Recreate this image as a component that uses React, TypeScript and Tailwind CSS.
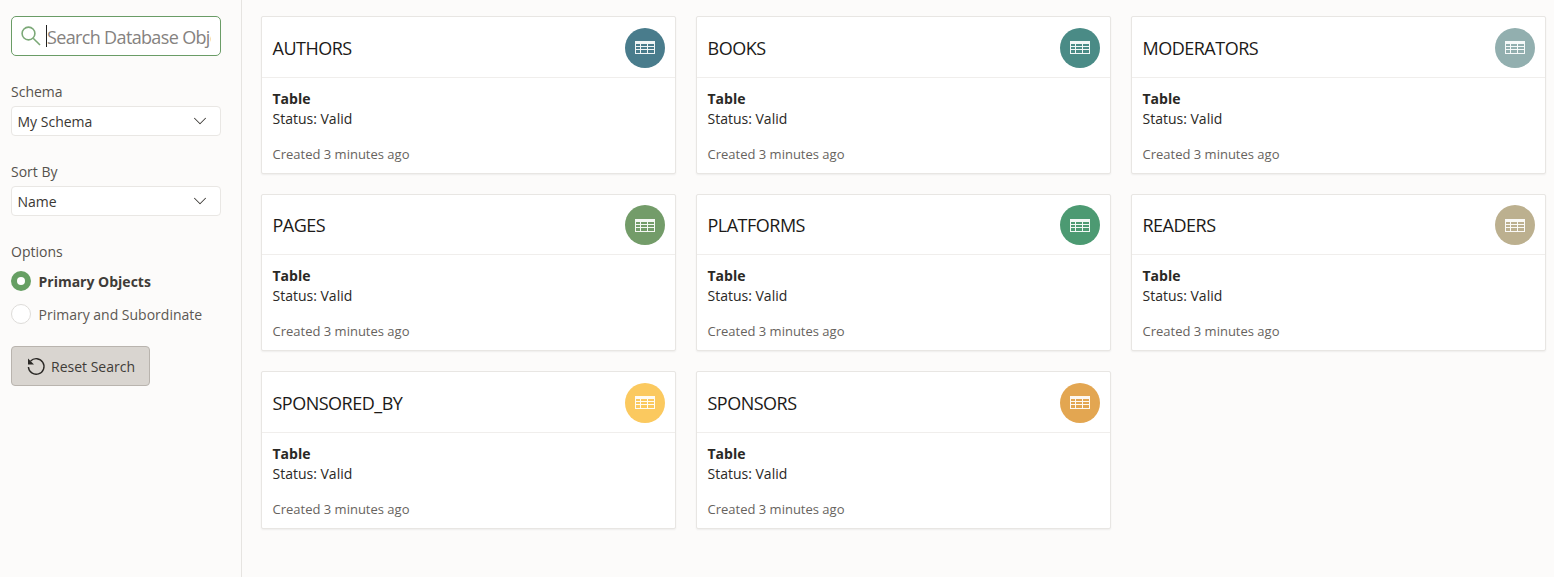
import { ChevronDown } from "lucide-react";

const FONT = "font-['Open_Sans','Noto_Sans',sans-serif]";

const TABLES = [
  { name: "AUTHORS", color: "bg-[#497c8c]" },
  { name: "BOOKS", color: "bg-[#4a8b86]" },
  { name: "MODERATORS", color: "bg-[#92afaf]" },
  { name: "PAGES", color: "bg-[#739c69]" },
  { name: "PLATFORMS", color: "bg-[#4c9a72]" },
  { name: "READERS", color: "bg-[#bcb08f]" },
  { name: "SPONSORED_BY", color: "bg-[#fbc95f]" },
  { name: "SPONSORS", color: "bg-[#e3a651]" },
];

const TableIcon = () => (
  <svg width="20" height="13" viewBox="0 0 20 13" fill="#fff" fillOpacity="0.92">
    <path
      fillRule="evenodd"
      d="M0 0H20V13H0ZM1 3V5H5V3ZM6 3V5H12V3ZM13 3V5H19V3ZM1 6V8H5V6ZM6 6V8H12V6ZM13 6V8H19V6ZM1 9V12H5V9ZM6 9V12H12V9ZM13 9V12H19V9Z"
    />
  </svg>
);

const SelectField = ({ label, value }: { label: string; value: string }) => (
  <div className="flex flex-col">
    <label className="text-[14px] leading-[22px] text-[#56524d] mb-[3px]">{label}</label>
    <div className="h-[30px] bg-white border border-[#e9e7e4] rounded-[4px] flex items-center justify-between pl-[5.5px] pr-[9px] text-[14px] text-[#3a3733]">
      <span>{value}</span>
      <ChevronDown size={22} strokeWidth={1.1} className="text-[#3f3c38]" />
    </div>
  </div>
);

const Card = ({ name, color }: { name: string; color: string }) => (
  <div className="h-[157.5px] bg-white border border-[#e8e6e3] rounded-[2px] shadow-[0_1px_2px_rgba(0,0,0,0.06)] flex flex-col">
    <div className="h-[60.75px] shrink-0 border-b border-[#f0eeec] pt-[10.75px] flex items-start justify-between pl-[10.5px] pr-[10px]">
      <h3 className="h-10 pt-[1px] flex items-center text-[18px] tracking-[-0.5px] text-[#1c1a18]">{name}</h3>
      <div className={`w-10 h-10 rounded-full flex items-center justify-center ${color}`}>
        <TableIcon />
      </div>
    </div>
    <div className="pl-[10.5px] pt-[11px] text-[14px] leading-[20px] text-[#2a2825]">
      <div className="font-bold">Table</div>
      <div>Status: Valid</div>
      <div className="mt-[15px] text-[13px] text-[#67635e]">Created 3 minutes ago</div>
    </div>
  </div>
);

export default function App() {
  return (
    <div className={`flex h-[577px] w-[1554px] overflow-hidden bg-[#fcfbfa] ${FONT}`}>
      <aside className="w-[242px] shrink-0 border-r border-[#e6e4e1] pl-[11px] pr-[20px] pt-4">
        <div className="h-10 bg-white border border-[#6a9c66] rounded-[5px] flex items-center pl-[9px] pr-[9px] overflow-hidden">
          <svg width="20" height="20" viewBox="0 0 20 20" fill="none" stroke="#7ba877" strokeWidth="1.6" className="shrink-0">
            <circle cx="7.5" cy="7.5" r="6.4" />
            <path d="M12.2 12.2 L19 19" />
          </svg>
          <span className="w-px h-[22px] bg-[#222] ml-[5px] shrink-0" />
          <input
            readOnly
            placeholder="Search Database Objects"
            className="min-w-0 flex-1 bg-transparent outline-none pt-[2px] text-[18px] tracking-[-0.65px] placeholder:text-[#858280]"
          />
        </div>
        <div className="mt-[25px] flex flex-col gap-[25px]">
          <SelectField label="Schema" value="My Schema" />
          <SelectField label="Sort By" value="Name" />
        </div>
        <div className="mt-[25px] text-[14px] leading-[22px] text-[#56524d]">Options</div>
        <div className="mt-[8px] flex items-center gap-[7.5px] h-5">
          <span className="w-5 h-5 rounded-full bg-[#669f63] flex items-center justify-center">
            <span className="w-2 h-2 rounded-full bg-white" />
          </span>
          <span className="text-[14px] font-bold text-[#3f3c38]">Primary Objects</span>
        </div>
        <div className="mt-[13px] flex items-center gap-[7.5px] h-5">
          <span className="w-5 h-5 rounded-full bg-white border border-[#dedcd9]" />
          <span className="text-[14px] text-[#5c5853]">Primary and Subordinate</span>
        </div>
        <button className="mt-[22px] h-10 w-[139px] bg-[#d9d5d0] border border-[#b9b4ae] rounded-[4px] flex items-center justify-center gap-[5px] text-[14px] text-[#3f3c38]">
          <svg width="20" height="20" viewBox="0 0 20 20" fill="none" stroke="#2a2825" strokeWidth="1.4">
            <path d="M4.6 5 A7.8 7.8 0 1 1 2.4 11" />
            <path d="M2 2.5 V8.5 H8 Z" fill="#2a2825" stroke="none" />
          </svg>
          Reset Search
        </button>
      </aside>
      <main className="flex-1 pl-[19px] pr-[8px] pt-4">
        <div className="grid grid-cols-3 gap-5">
          {TABLES.map((table) => (
            <Card key={table.name} name={table.name} color={table.color} />
          ))}
        </div>
      </main>
    </div>
  );
}
